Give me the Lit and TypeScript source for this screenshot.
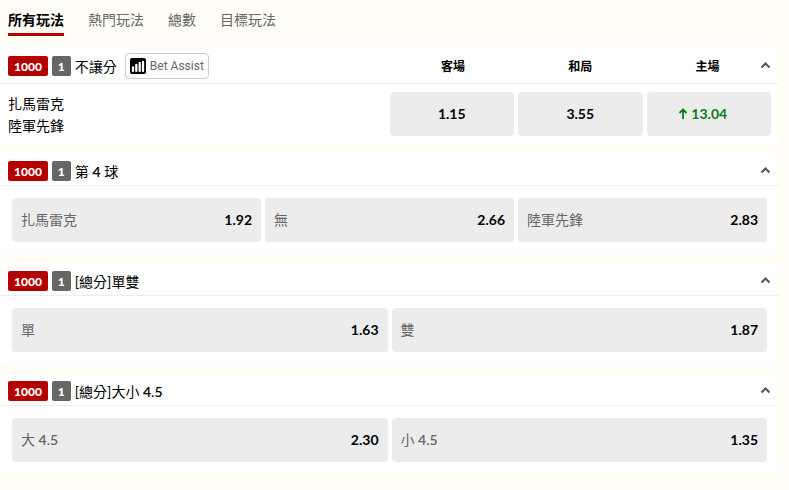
import { LitElement, html, css, svg, nothing } from "lit";
import { customElement, property, state } from "lit/decorators.js";
import { classMap } from "lit/directives/class-map.js";

interface Pick {
  name: string;
  line?: string;
  odds: string;
  rising?: boolean;
}

interface Market {
  title: string;
  line?: string;
  suffix?: string;
  assist?: boolean;
  teams?: string[];
  picks: Pick[];
}

const TABS = ["所有玩法", "熱門玩法", "總數", "目標玩法"];

const MARKETS: Market[] = [
  {
    title: "不讓分",
    assist: true,
    teams: ["扎馬雷克", "陸軍先鋒"],
    picks: [
      { name: "客場", odds: "1.15" },
      { name: "和局", odds: "3.55" },
      { name: "主場", odds: "13.04", rising: true },
    ],
  },
  {
    title: "第",
    line: "4",
    suffix: "球",
    picks: [
      { name: "扎馬雷克", odds: "1.92" },
      { name: "無", odds: "2.66" },
      { name: "陸軍先鋒", odds: "2.83" },
    ],
  },
  {
    title: "[總分]單雙",
    picks: [
      { name: "單", odds: "1.63" },
      { name: "雙", odds: "1.87" },
    ],
  },
  {
    title: "[總分]大小",
    line: "4.5",
    picks: [
      { name: "大", line: "4.5", odds: "2.30" },
      { name: "小", line: "4.5", odds: "1.35" },
    ],
  },
];

const bars = svg`
  <rect width="16" height="16" rx="2" fill="#000" />
  <path d="M3 9.500v3.500M6.300 7v6M9.700 5v8M13 4v9" stroke="#fff" stroke-width="2.300" stroke-linecap="round" />
`;

@customElement("market-card")
export class MarketCard extends LitElement {
  @property({ attribute: false }) market!: Market;
  @state() private open = true;

  static styles = css`
    :host {
      display: block;
      background: #fff;
      border-radius: 4px;
    }
    button {
      font: inherit;
      border: 0;
      cursor: pointer;
    }
    .head {
      display: grid;
      grid-template-columns: 1fr 1fr;
      align-items: center;
      height: 32px;
      padding: 0 8px;
      border-bottom: 1px solid #eeeef2;
    }
    .head.tall {
      height: 38px;
    }
    .lead {
      display: flex;
      align-items: center;
      gap: 4px;
      padding-top: 4px;
      grid-area: 1 / 1;
      white-space: nowrap;
    }
    .badge {
      height: 20px;
      padding: 0 6px;
      border-radius: 2px;
      background: #b50000;
      color: #fff;
      font-size: 12px;
      font-weight: 900;
      line-height: 22px;
    }
    .badge.count {
      background: #666;
    }
    .title {
      height: 22px;
      margin: 0;
      font-size: 14px;
      font-weight: 400;
      line-height: 24px;
    }
    .line {
      font-weight: 600;
    }
    .assist {
      display: flex;
      align-items: center;
      gap: 4px;
      height: 26px;
      margin-left: 4px;
      padding: 0 4px;
      border: 1px solid #ccc;
      border-radius: 4px;
      background: #fff;
      color: #666;
      font-family: Roboto, sans-serif;
      font-size: 12px;
    }
    .columns {
      grid-area: 1 / 2;
      display: grid;
      grid-template-columns: repeat(3, 1fr);
      padding-top: 6px;
      text-align: center;
      font-size: 12px;
      font-weight: 700;
      line-height: 20px;
    }
    .toggle {
      grid-area: 1 / 2;
      justify-self: end;
      display: flex;
      padding: 2px 0 0;
      background: none;
    }
    .body {
      display: grid;
      grid-auto-flow: column;
      grid-auto-columns: 1fr;
      gap: 4px;
      padding: 12px;
    }
    .body.split {
      grid-auto-flow: row;
      grid-template-columns: 1fr 1fr;
      gap: 0;
      padding: 8px;
    }
    .teams {
      font-size: 14px;
    }
    .team {
      height: 22px;
      line-height: 24px;
    }
    .prices {
      display: grid;
      grid-template-columns: repeat(3, 1fr);
      gap: 4px;
    }
    .pick {
      display: flex;
      align-items: center;
      justify-content: space-between;
      height: 44px;
      padding: 0 9px 2px;
      border-radius: 4px;
      background: #ececec;
      color: #666;
      font-size: 14px;
    }
    .pick.center {
      justify-content: center;
      gap: 3px;
    }
    .pick.rising {
      padding-right: 21px;
    }
    .odds {
      color: #000;
      font-weight: 700;
    }
    .rising .odds {
      color: #0a7d12;
    }
    svg {
      display: block;
    }
  `;

  private renderLine(line?: string) {
    return line ? html` <span class="line">${line}</span>` : nothing;
  }

  private renderPick(p: Pick, centered: boolean) {
    return html`<button
      class=${classMap({ pick: true, center: centered, rising: !!p.rising })}
      aria-label="${p.name} ${p.odds}"
    >
      ${centered ? nothing : html`<span>${p.name}${this.renderLine(p.line)}</span>`}
      ${p.rising
        ? html`<svg width="10" height="14" viewBox="0 0 10 14" fill="none" aria-hidden="true">
            <path d="M5 13V4M1.500 7L5 3.500 8.500 7" stroke="#0a7d12" stroke-width="1.800" />
          </svg>`
        : nothing}
      <span class="odds">${p.odds}</span>
    </button>`;
  }

  render() {
    const m = this.market;
    const split = !!m.teams;
    const prices = m.picks.map((p) => this.renderPick(p, split));
    return html`
      <div class=${classMap({ head: true, tall: split })}>
        <div class="lead">
          <span class="badge">1000</span>
          <span class="badge count">1</span>
          <h2 class="title">${m.title}${this.renderLine(m.line)} ${m.suffix ?? nothing}</h2>
          ${m.assist
            ? html`<button class="assist">
                <svg width="16" height="16" viewBox="0 0 16 16" fill="none" aria-hidden="true">${bars}</svg>
                Bet Assist
              </button>`
            : nothing}
        </div>
        ${split
          ? html`<div class="columns">${m.picks.map((p) => html`<span>${p.name}</span>`)}</div>`
          : nothing}
        <button
          class="toggle"
          aria-label=${m.title}
          aria-expanded=${this.open}
          @click=${() => (this.open = !this.open)}
        >
          <svg width="11" height="8" viewBox="0 0 11 8" fill="none" aria-hidden="true">
            <path d="M1.500 6.500l4-4 4 4" stroke="#555" stroke-width="2" />
          </svg>
        </button>
      </div>
      ${!this.open
        ? nothing
        : split
          ? html`<div class="body split">
              <div class="teams">${m.teams!.map((t) => html`<div class="team">${t}</div>`)}</div>
              <div class="prices">${prices}</div>
            </div>`
          : html`<div class="body">${prices}</div>`}
    `;
  }
}

@customElement("app-root")
export class AppRoot extends LitElement {
  @state() private active = 0;

  static styles = css`
    :host {
      display: block;
      box-sizing: border-box;
      min-height: 100vh;
      padding: 0 10px 16px 0;
      background: #fffdf5;
      color: #000;
      font-family: Lato, "Noto Sans CJK TC", sans-serif;
    }
    .tabs {
      display: flex;
      gap: 24px;
      height: 45px;
      padding: 0 8px;
    }
    .tab {
      height: 36px;
      padding: 4px 0 0;
      border: 0;
      border-bottom: 3px solid transparent;
      background: none;
      color: #666;
      font: inherit;
      font-size: 14px;
      cursor: pointer;
    }
    .tab.active {
      border-color: #b50000;
      color: #000;
      font-weight: 700;
    }
    .list {
      display: flex;
      flex-direction: column;
      gap: 9px;
    }
  `;

  render() {
    return html`
      <nav class="tabs">
        ${TABS.map(
          (t, i) => html`<button
            class=${classMap({ tab: true, active: i === this.active })}
            @click=${() => (this.active = i)}
          >
            ${t}
          </button>`,
        )}
      </nav>
      <main class="list">
        ${MARKETS.map((m) => html`<market-card .market=${m}></market-card>`)}
      </main>
    `;
  }
}
